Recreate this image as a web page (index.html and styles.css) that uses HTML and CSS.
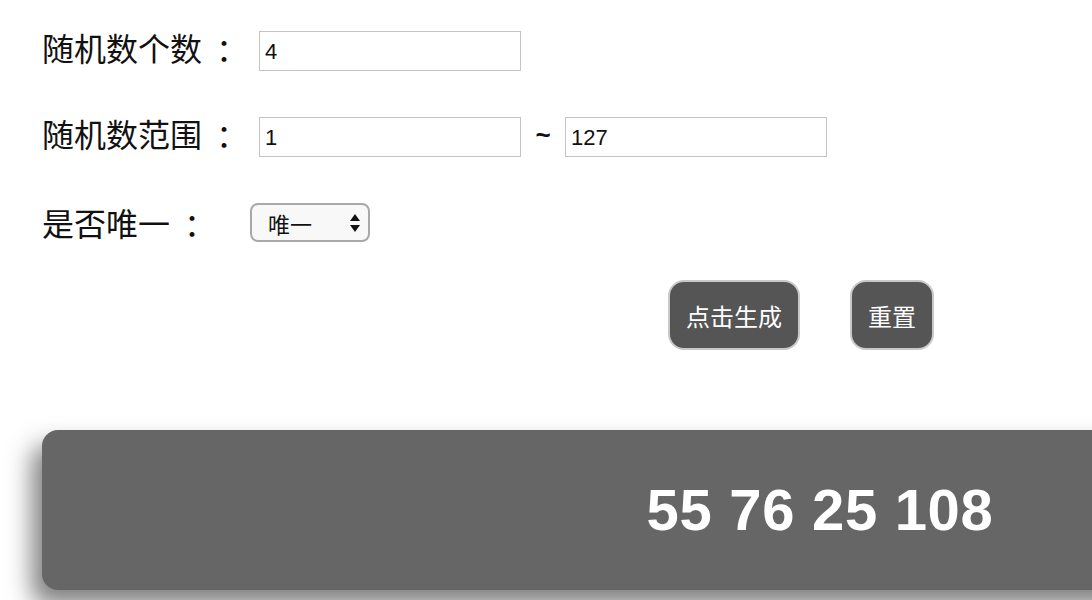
FILE: index.html
```html
<!DOCTYPE html>
<html lang="zh">
<head>
<meta charset="utf-8">
<title>随机数生成</title>
<link rel="stylesheet" href="styles.css">
</head>
<body>
<div class="page">
  <div class="row">
    <label class="label">随机数个数<span class="colon">：</span></label>
    <input class="field" type="text" value="4">
  </div>
  <div class="row">
    <label class="label">随机数范围<span class="colon">：</span></label>
    <input class="field" type="text" value="1">
    <span class="tilde">~</span>
    <input class="field" type="text" value="127">
  </div>
  <div class="row">
    <label class="label label-short">是否唯一<span class="colon">：</span></label>
    <div class="select-wrap">
      <select class="select">
        <option>唯一</option>
        <option>不唯一</option>
      </select>
      <svg class="select-arrows" width="12" height="20" viewBox="0 0 12 20">
        <path d="M6 1 L11 8 H1 Z" fill="#111"/>
        <path d="M6 19 L11 12 H1 Z" fill="#111"/>
      </svg>
    </div>
  </div>
  <div class="actions">
    <button class="btn">点击生成</button>
    <button class="btn">重置</button>
  </div>
  <div class="result">55 76 25 108</div>
</div>
</body>
</html>
```
FILE: styles.css
```css
html {
  overflow: hidden;
  background: #fff;
}
body {
  margin: 0;
  padding: 0;
  height: 600px;
  font-family: "Noto Sans CJK SC", "Liberation Sans", sans-serif;
  color: #111;
}
.page {
  padding: 31px 0 0 42px;
}
.row {
  display: flex;
  align-items: flex-start;
  height: 40px;
  margin-bottom: 46px;
}
.label {
  font-size: 32px;
  line-height: 32px;
  width: 217px;
  flex: none;
  white-space: nowrap;
}
.colon {
  padding-left: 14px;
}
.label-short {
  width: 208px;
  line-height: 38px;
}
.field {
  box-sizing: border-box;
  width: 262px;
  height: 40px;
  border: 1px solid #c4c4c4;
  padding: 2px 5px 0;
  font-family: "Liberation Sans", "Noto Sans CJK SC", sans-serif;
  font-size: 22px;
  color: #111;
  background: #fff;
  outline: none;
  margin: 0;
}
.tilde {
  width: 44px;
  text-align: center;
  font-family: "Liberation Sans", sans-serif;
  font-weight: bold;
  font-size: 26px;
  line-height: 36px;
}
.select-wrap {
  position: relative;
  width: 120px;
  height: 39px;
}
.select {
  appearance: none;
  -webkit-appearance: none;
  box-sizing: border-box;
  width: 120px;
  height: 39px;
  border: 2px solid #a9a9a9;
  border-radius: 8px;
  background: #f8f8f8;
  padding: 0 0 0 16px;
  font-family: "Noto Sans CJK SC", sans-serif;
  font-size: 22px;
  color: #111;
  margin: 0;
}
.select-arrows {
  position: absolute;
  right: 9px;
  top: 10px;
  pointer-events: none;
}
.actions {
  display: flex;
  gap: 50px;
  margin: -9px 0 0 626px;
}
.btn {
  box-sizing: border-box;
  height: 70px;
  padding: 0 16px;
  border: 2px solid #c8c8c8;
  border-radius: 16px;
  background: #555;
  color: #fff;
  font-family: "Noto Sans CJK SC", sans-serif;
  font-size: 24px;
}
.result {
  margin-top: 80px;
  width: 1556px;
  height: 160px;
  box-sizing: border-box;
  background: #666;
  border-radius: 16px;
  box-shadow: -10px 15px 25px rgba(0, 0, 0, 0.5);
  color: #fff;
  font-family: "Liberation Sans", sans-serif;
  font-weight: bold;
  font-size: 58px;
  letter-spacing: 0.7px;
  line-height: 160px;
  text-align: center;
}
```
